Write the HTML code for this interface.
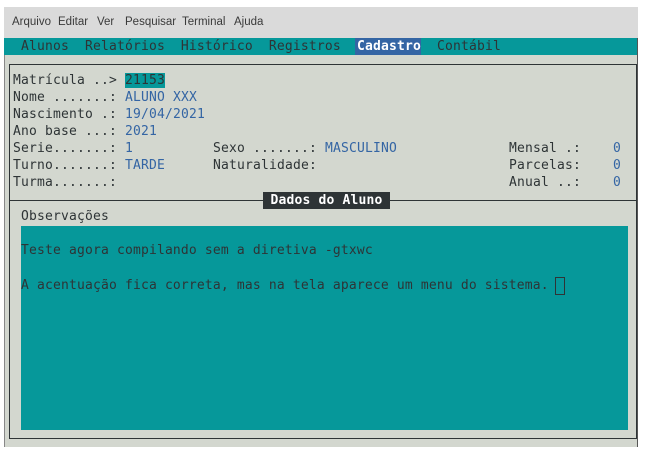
<!DOCTYPE html>
<html><head><meta charset="utf-8"><style>
*{margin:0;padding:0;box-sizing:border-box}
body{width:648px;height:454px;background:#fff;position:relative;overflow:hidden;font-family:"DejaVu Sans Mono","Liberation Mono",monospace;font-size:13px;color:#2e3436}
.win{position:absolute;left:4px;top:7px;width:634px;height:440px;background:#d3d7cf;border-left:1px solid #888;border-right:1px solid #555}
.menu{position:absolute;left:4px;top:7px;width:634px;height:31px;background:#dadada;font-family:"Liberation Sans","DejaVu Sans",sans-serif;font-size:11.5px;color:#3a3a3a}
.menu span{position:absolute;top:9px}
.bar{position:absolute;left:4px;top:38px;width:633px;height:17px;background:#06989a}
.t{position:absolute;white-space:pre;letter-spacing:0.17px;line-height:17px}
.b{color:#3465a4}
.f1{position:absolute;left:9px;top:64px;width:628px;height:137px;border:1px solid #2e3436;border-bottom:none}
.f2{position:absolute;left:9px;top:200px;width:628px;height:239px;border:1px solid #2e3436;border-top:1px solid #2e3436}
.obs{position:absolute;left:21px;top:226px;width:607px;height:204px;background:#06989a}
</style></head><body>
<div class="win"></div>
<div class="menu"><span style="left:8px">Arquivo</span><span style="left:54px">Editar</span><span style="left:93px">Ver</span><span style="left:121px">Pesquisar</span><span style="left:178px">Terminal</span><span style="left:230px">Ajuda</span></div>
<div class="bar"></div>
<div class="t" style="left:21px;top:38px">Alunos  Relatórios  Histórico  Registros</div>
<div class="t" style="left:355px;top:38px;background:#3465a4;color:#fff;font-weight:bold;width:66px;height:17px;padding-left:2px">Cadastro</div>
<div class="t" style="left:437px;top:38px">Contábil</div>
<div class="f1"></div>
<div class="f2"></div>
<div class="t" style="left:13px;top:72px">Matrícula ..> <span style="background:#06989a">21153</span></div>
<div class="t" style="left:13px;top:89px">Nome .......: <span class="b">ALUNO XXX</span></div>
<div class="t" style="left:13px;top:106px">Nascimento .: <span class="b">19/04/2021</span></div>
<div class="t" style="left:13px;top:123px">Ano base ...: <span class="b">2021</span></div>
<div class="t" style="left:13px;top:140px">Serie.......: <span class="b">1</span></div>
<div class="t" style="left:13px;top:157px">Turno.......: <span class="b">TARDE</span></div>
<div class="t" style="left:13px;top:174px">Turma.......:</div>
<div class="t" style="left:213px;top:140px">Sexo .......: <span class="b">MASCULINO</span></div>
<div class="t" style="left:213px;top:157px">Naturalidade:</div>
<div class="t" style="left:509px;top:140px">Mensal .:    <span class="b">0</span></div>
<div class="t" style="left:509px;top:157px">Parcelas:    <span class="b">0</span></div>
<div class="t" style="left:509px;top:174px">Anual ..:    <span class="b">0</span></div>
<div class="t" style="left:263px;top:192px;width:127px;height:17px;background:#2e3436;color:#fff;font-weight:bold;text-align:center">Dados do Aluno</div>
<div class="t" style="left:21px;top:208px">Observações</div>
<div class="obs"></div>
<div class="t" style="left:21px;top:242px">Teste agora compilando sem a diretiva -gtxwc</div>
<div class="t" style="left:21px;top:277px">A acentuação fica correta, mas na tela aparece um menu do sistema.</div>
<div style="position:absolute;left:555px;top:277px;width:10px;height:18px;border:1px solid #2e3436"></div>
</body></html>
